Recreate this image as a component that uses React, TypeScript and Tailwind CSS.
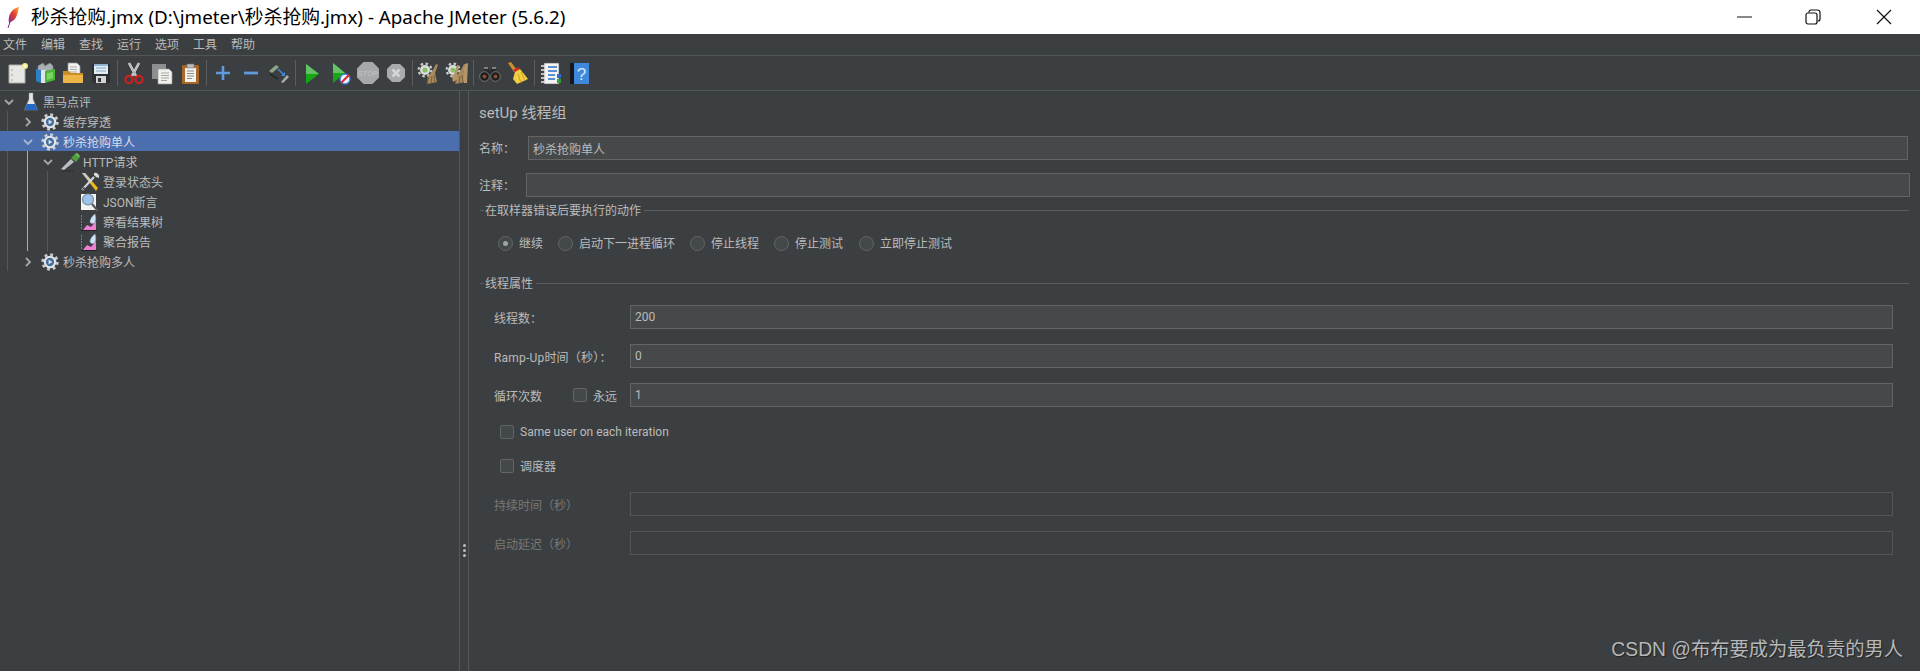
import type { ReactNode } from "react";

const cjk = "font-['Roboto','Noto_Sans_CJK_SC',sans-serif]";

/* ---------- toolbar icons ---------- */

const Svg = ({ w = 24, h = 24, children }: { w?: number; h?: number; children: ReactNode }) => (
  <svg width={w} height={h} viewBox={`0 0 ${w} ${h}`}>
    {children}
  </svg>
);

const NewIcon = () => (
  <Svg>
    <path d="M4 4h14l2 2v16H4z" fill="#e6e6e2" stroke="#a9a9a5" />
    <circle cx="7" cy="9" r="0.8" fill="#999" />
    <circle cx="7" cy="14" r="0.8" fill="#999" />
    <circle cx="7" cy="19" r="0.8" fill="#999" />
    <circle cx="20" cy="5" r="3" fill="#f5e98a" />
    <circle cx="20" cy="5" r="1.4" fill="#fffbd0" />
  </Svg>
);

const TemplatesIcon = () => (
  <Svg>
    <path d="M5 5l5-3 2 3 5-3 3 3v5H5z" fill="#a9b0b3" stroke="#7d8488" strokeWidth="0.6" />
    <path d="M3 8l5 1v13l-5-2z" fill="#2e7fc4" />
    <path d="M8 9h5v13H8z" fill="#dfe5e4" />
    <path d="M12 10l10-2v11l-10 3z" fill="#4cb53a" />
    <path d="M14 12l6-1v6l-6 2z" fill="#7ad65f" />
  </Svg>
);

const OpenIcon = () => (
  <Svg>
    <path d="M7 2h9l3 3v9H7z" fill="#f2f2f0" stroke="#999" strokeWidth="0.7" />
    <path d="M9 6h7M9 8.5h7M9 11h7" stroke="#aaa" />
    <path d="M2 10h6l2 2h12v9a1 1 0 0 1-1 1H3a1 1 0 0 1-1-1z" fill="#c98f27" />
    <path d="M2 14h20v7a1 1 0 0 1-1 1H3a1 1 0 0 1-1-1z" fill="#ecb547" />
  </Svg>
);

const SaveIcon = () => (
  <Svg>
    <path d="M3 3h18v19H5l-2-2z" fill="#2d3033" />
    <path d="M5 3h14v10H5z" fill="#e4ecf3" />
    <path d="M5 3h14v2H5z" fill="#8fb2d4" />
    <path d="M7 7h10M7 10h10" stroke="#86a8c8" />
    <path d="M7 15h10v7H7z" fill="#d2d4d4" />
    <path d="M9 17h3v4H9z" fill="#33363a" />
  </Svg>
);

const CutIcon = () => (
  <Svg>
    <path d="M7 2l7 13M17 2l-7 13" stroke="#d7dadb" strokeWidth="2.6" />
    <path d="M7 2l7 13M17 2l-7 13" stroke="#8d9295" strokeWidth="0.6" />
    <circle cx="7" cy="18.5" r="3.6" fill="none" stroke="#cf2020" strokeWidth="2.2" />
    <circle cx="17" cy="18.5" r="3.6" fill="none" stroke="#cf2020" strokeWidth="2.2" />
  </Svg>
);

const CopyIcon = () => (
  <Svg>
    <path d="M2 3h14v15H2z" fill="#8c8f90" />
    <path d="M8 8h11l3 3v12H8z" fill="#f1f1ef" stroke="#9b9b98" strokeWidth="0.7" />
    <path d="M11 12h8M11 14.5h8M11 17h8M11 19.5h6" stroke="#a5a5a2" />
  </Svg>
);

const PasteIcon = () => (
  <Svg>
    <rect x="4" y="4" width="17" height="19" rx="1.5" fill="#a8682a" />
    <path d="M7 7h11v14H7z" fill="#f2f2ef" />
    <path d="M9 3h7v4H9z" fill="#b9bdbf" stroke="#6f7376" strokeWidth="0.6" />
    <path d="M9 10h7M9 12.5h7M9 15h7M9 17.5h5" stroke="#8c8c8a" />
  </Svg>
);

const PlusIcon = () => (
  <Svg>
    <path d="M12 5v14M5 12h14" stroke="#5d9bdd" strokeWidth="2.6" />
  </Svg>
);

const MinusIcon = () => (
  <Svg>
    <path d="M5 12h14" stroke="#5d9bdd" strokeWidth="2.8" />
  </Svg>
);

const ToggleIcon = () => (
  <Svg>
    <path d="M2 10l7-6 3 2-7 6z" fill="#8aa684" />
    <path d="M3 13l8 5" stroke="#24272a" strokeWidth="1.6" />
    <path d="M11 8l6 6" stroke="#3f8fe0" strokeWidth="1.4" />
    <path d="M18 11v4h-4z" fill="#3f8fe0" />
    <path d="M14 21l6-7 2 2-6 6z" fill="#a9b0a5" />
  </Svg>
);

const PlayIcon = () => (
  <Svg>
    <path d="M6 3l13 10-13 10z" fill="#16a616" />
    <path d="M6 3l13 10H6z" fill="#67c267" />
  </Svg>
);

const PlayNoTimerIcon = () => (
  <Svg>
    <path d="M5 2l12 10-12 10z" fill="#16a616" />
    <path d="M5 2l12 10H5z" fill="#67c267" />
    <circle cx="17" cy="18" r="5" fill="#f1f4f8" stroke="#3c7fd0" strokeWidth="1.4" />
    <path d="M13 22l8-8" stroke="#d8263a" strokeWidth="2" />
  </Svg>
);

const StopIcon = () => (
  <svg width="24" height="24" viewBox="0 0 24 24">
    <path d="M7.500 1h9L23 7.500v9L16.500 23h-9L1 16.500v-9z" fill="#a6a8a9" />
    <text x="12" y="14.500" fontSize="7.500" fontWeight="700" fontFamily="Liberation Sans" fill="#bcbebf" textAnchor="middle">
      STOP
    </text>
  </svg>
);

const ShutdownIcon = () => (
  <Svg>
    <path d="M8 3h8l5 5v8l-5 5H8l-5-5V8z" fill="#a9abac" />
    <path d="M8.500 8.500l7 7M15.500 8.500l-7 7" stroke="#d5d6d6" strokeWidth="2.6" />
  </Svg>
);

const ClearIcon = ({ two }: { two?: boolean }) => (
  <Svg>
    <circle cx="8" cy="9" r="6.4" fill="none" stroke="#c9cbc9" strokeWidth="2.2" strokeDasharray="2.500 2.500" />
    <circle cx="8" cy="9" r="5" fill="#dcdedd" />
    <circle cx="8" cy="9" r="2.600" fill="#8bc063" />
    <path d="M15 11l4-8 2 1-3 8 2 9-10 2 1-8z" fill="#a98a5c" />
    <path d="M12 16l-2 7M15 15l-1 8M17 14l1 7" stroke="#6d5433" strokeWidth="0.8" />
    {two && <path d="M9 13l3-9 2 1-2 8 1 5-5 3-1-5z" fill="#b59668" />}
    {two && <path d="M20 3l3-1-1 20h-3l-1-9z" fill="#b59668" />}
  </Svg>
);

const SearchIcon = () => (
  <Svg>
    <path d="M7 7h3l2 3 2-3h3l5 9H2z" fill="#2a2a2a" />
    <path d="M6 7h4M14 7h4" stroke="#9a9a9a" strokeWidth="1.4" />
    <circle cx="6.500" cy="15.500" r="4.800" fill="#1c1c1c" stroke="#8a8a8a" strokeWidth="0.8" />
    <circle cx="17.500" cy="15.500" r="4.800" fill="#1c1c1c" stroke="#8a8a8a" strokeWidth="0.8" />
    <circle cx="6.500" cy="15.500" r="2" fill="#8a4a34" />
    <circle cx="17.500" cy="15.500" r="2" fill="#8a4a34" />
  </Svg>
);

const BroomIcon = () => (
  <Svg>
    <path d="M2 2l3-1 6 8-3 2z" fill="#c98f2b" />
    <path d="M7 9l5-3 2 2-5 3z" fill="#d8262c" />
    <path d="M9 11l5-3 8 10-11 5-4-5z" fill="#f2cf3e" />
    <path d="M12 13l3 9M15 11l4 9" stroke="#c9a12a" />
  </Svg>
);

const FunctionIcon = () => (
  <Svg>
    <path d="M5 2h15v21H5z" fill="#f3f3f3" stroke="#555" strokeWidth="0.6" />
    <path d="M2 5h5M2 9h5M2 13h5M2 17h5M2 21h5" stroke="#e8e8e8" strokeWidth="1.4" />
    <path d="M9 6h9M9 10h9M9 14h7M9 18h7" stroke="#2b6fc4" strokeWidth="1.6" />
    <path d="M18 13h4v4h-4z" fill="#2b6fc4" />
    <path d="M18 18h4v4h-4z" fill="#35a03a" />
  </Svg>
);

const HelpIcon = () => (
  <Svg>
    <path d="M3 2h5v21H3z" fill="#16191c" />
    <path d="M7 2h15v21H7z" fill="#3f88dd" />
    <text x="14.500" y="19" fontSize="17" fontFamily="Liberation Sans" fill="#d9e9fb" textAnchor="middle">
      ?
    </text>
  </Svg>
);

const ClearAllIcon = () => <ClearIcon two />;

const toolbarGroups = [
  [NewIcon, TemplatesIcon, OpenIcon, SaveIcon],
  [CutIcon, CopyIcon, PasteIcon],
  [PlusIcon, MinusIcon, ToggleIcon],
  [PlayIcon, PlayNoTimerIcon, StopIcon, ShutdownIcon],
  [ClearIcon, ClearAllIcon],
  [SearchIcon, BroomIcon],
  [FunctionIcon, HelpIcon],
];

/* ---------- tree icons ---------- */

const Gear = () => (
  <svg width="18" height="18" viewBox="0 0 20 20">
    <circle cx="10" cy="10" r="8.200" fill="none" stroke="#c9cbcc" strokeWidth="3" strokeDasharray="3.200 3.240" />
    <circle cx="10" cy="10" r="7" fill="#e4e5e6" />
    <circle cx="10" cy="10" r="4.600" fill="#44709f" />
    <path d="M8.500 7.500l4 2.500-4 2.500z" fill="#dfe8f2" />
  </svg>
);

const Flask = () => (
  <svg width="14" height="20" viewBox="0 0 14 20">
    <path d="M5 1h4v6l4.500 11H.500L5 7z" fill="#e3e6e8" stroke="#8a9095" strokeWidth="0.5" />
    <path d="M3 12h8l2.500 6H.500z" fill="#2467c4" />
  </svg>
);

const Dropper = () => (
  <svg width="22" height="20" viewBox="0 0 22 20">
    <path d="M1 17l10-10 3 3L4 18z" fill="#b9bec0" />
    <path d="M11 6l4-4 5 3-4 5z" fill="#4e9e3e" />
    <path d="M15 2l2-1 3 3-1 1z" fill="#7bc964" />
    <path d="M2 19h12" stroke="#2c2e30" strokeWidth="1" />
  </svg>
);

const Wrench = () => (
  <svg width="20" height="20" viewBox="0 0 20 20">
    <path d="M2 1l3 0 13 15-2 3z" fill="#e9b91f" />
    <path d="M2 1l3 0 7 8-2 2z" fill="#c8c8c8" />
    <path d="M2 18L14 5" stroke="#d8d8d8" strokeWidth="2" />
    <path d="M14 1a4 4 0 0 1 5 5l-3-1-2-2z" fill="#d8d8d8" />
    <path d="M1 19l3-4 1 1z" fill="#222" />
  </svg>
);

const Assertion = () => (
  <svg width="20" height="20" viewBox="0 0 20 20">
    <path d="M1 2h15v16H1z" fill="#f3f3f3" />
    <circle cx="8" cy="7.500" r="5.500" fill="#9cc4ec" stroke="#7b8c9c" strokeWidth="1.200" />
    <path d="M12 12l6 7" stroke="#55585a" strokeWidth="2.200" />
  </svg>
);

const Graph = () => (
  <svg width="20" height="20" viewBox="0 0 20 20">
    <path d="M1.500 3v15" stroke="#77797a" strokeDasharray="2 1" />
    <path d="M1 18.500h16" stroke="#202224" />
    <path d="M3 18l4-5 4 2 5-6v9z" fill="#ee7fd0" />
    <path d="M10 10c0-3 2-6 5-8 1 3 1 6 0 8-1 2-4 2-5 0z" fill="#cfe1f6" stroke="#8fa8c4" strokeWidth="0.5" />
  </svg>
);

/* ---------- tree ---------- */

type TreeRowProps = {
  label: string;
  icon: ReactNode;
  level: 0 | 1 | 2 | 3;
  arrow?: "down" | "right";
  selected?: boolean;
  guides?: ("root" | "selected" | "http")[];
};

const indent = {
  0: { arrow: "w-[24px] pl-[3px]", text: "ml-[5px]" },
  1: { arrow: "w-[41px] pl-[22px]", text: "ml-[4px]" },
  2: { arrow: "w-[60px] pl-[42px]", text: "ml-[1px]" },
  3: { arrow: "w-[80px]", text: "ml-[3px]" },
};

const TreeRow = ({ label, icon, level, arrow, selected, guides = [] }: TreeRowProps) => (
  <div className={`relative flex h-5 items-center pt-[2px] ${selected ? "bg-[#4b6eaf] text-[#d8dde6]" : ""}`}>
    {guides.includes("root") && <span className="absolute inset-y-0 left-[7px] w-px bg-[#55585a]" />}
    {guides.includes("selected") && <span className="absolute inset-y-0 left-[27px] w-px bg-[#7fb6e6]" />}
    {guides.includes("http") && <span className="absolute inset-y-0 left-[47px] w-px bg-[#55585a]" />}
    <span className={`flex shrink-0 items-center ${indent[level].arrow}`}>
      {arrow && (
        <svg width="12" height="12" viewBox="0 0 12 12">
          <path
            d={arrow === "down" ? "M2 4l4 4 4-4" : "M4 2l4 4-4 4"}
            fill="none"
            stroke={selected ? "#a9b6cc" : "#a4a6a8"}
            strokeWidth="1.800"
          />
        </svg>
      )}
    </span>
    {icon}
    <span className={`pt-[2px] ${indent[level].text}`}>{label}</span>
  </div>
);

/* ---------- form bits ---------- */

const Field = ({ value = "", disabled, className }: { value?: string; disabled?: boolean; className: string }) => (
  <input
    readOnly
    defaultValue={value}
    className={`h-6 border px-[4px] text-[12px] outline-none ${
      disabled ? "border-[#535556] bg-[#3c3f41]" : "border-[#646464] bg-[#45494a] text-[#bbbbbb]"
    } ${className}`}
  />
);

const Legend = ({ label, className }: { label: string; className: string }) => (
  <div className={`flex items-center pl-[1px] pr-[1px] ${className}`}>
    <span className="h-px w-[4px] bg-[#5a5d5f]" />
    <span className="px-[1px] pt-[1px] text-[12px]">{label}</span>
    <span className="ml-[2px] h-px flex-1 bg-[#5a5d5f]" />
  </div>
);

const Radio = ({ label, checked, className }: { label: string; checked?: boolean; className?: string }) => (
  <div className={`flex items-center ${className}`}>
    <span className="flex size-[15px] items-center justify-center rounded-full border border-[#646464] bg-[#43494a]">
      {checked && <span className="size-[5px] rounded-full bg-[#a0a3a5]" />}
    </span>
    <span className="ml-[6px] pt-[1px]">{label}</span>
  </div>
);

const Check = () => <span className="size-[14px] shrink-0 rounded-[2px] border border-[#646464] bg-[#43494a]" />;

const menus = ["文件", "编辑", "查找", "运行", "选项", "工具", "帮助"];

export default function App() {
  return (
    <div className={`relative flex h-[671px] w-[1920px] flex-col overflow-hidden bg-[#3c3f41] text-[12px] text-[#bbbbbb] ${cjk}`}>
      {/* Title bar */}
      <div className="flex h-[34px] items-center bg-white text-black">
        <svg className="ml-[7px]" width="13" height="23" viewBox="0 0 13 23">
          <defs>
            <linearGradient id="feather" x1="1" y1="0" x2="0" y2="1">
              <stop offset="0" stopColor="#f6b73c" />
              <stop offset="0.450" stopColor="#e8402f" />
              <stop offset="1" stopColor="#7d2a8c" />
            </linearGradient>
          </defs>
          <path d="M12 1C7 2 3 6 2 11c-.5 2-.5 4 0 6l5-3c3-3 4-8 5-13z" fill="url(#feather)" />
          <path d="M3 16L1 22" stroke="#7d2a8c" strokeWidth="1" />
        </svg>
        <span className="ml-[11px] font-['Noto_Sans','Noto_Sans_CJK_SC',sans-serif] text-[18.800px] leading-none">
          秒杀抢购.jmx (D:\jmeter\秒杀抢购.jmx) - Apache JMeter (5.6.2)
        </span>
        <div className="ml-auto flex items-center">
          <svg width="16" height="16" viewBox="0 0 16 16" className="mr-[53px]">
            <path d="M1 8h15" stroke="#111" strokeWidth="1" />
          </svg>
          <svg width="16" height="16" viewBox="0 0 16 16" className="mr-[55px]">
            <rect x="1" y="4" width="11" height="11" rx="2" fill="none" stroke="#111" strokeWidth="1.200" />
            <path d="M4 3.500V3a2 2 0 0 1 2-2h6.500A2.500 2.500 0 0 1 15 3.500V10a2 2 0 0 1-2 2h-.500" fill="none" stroke="#111" strokeWidth="1.200" />
          </svg>
          <svg width="16" height="16" viewBox="0 0 16 16" className="mr-[28px]">
            <path d="M1 1l14 14M15 1L1 15" stroke="#111" strokeWidth="1.200" />
          </svg>
        </div>
      </div>

      {/* Menu bar */}
      <div className="flex h-[22px] items-center border-b border-[#515658] pl-[3px]">
        {menus.map((m) => (
          <span key={m} className="w-[38px]">
            {m}
          </span>
        ))}
      </div>

      {/* Toolbar */}
      <div className="flex h-[35px] items-center border-b border-[#515658] pl-[3px]">
        {toolbarGroups.map((group, i) => (
          <div key={i} className="flex items-center">
            {i > 0 && (
              <span className="flex h-[26px] w-[5px] justify-center">
                <span className="w-px bg-[#5a5d5f]" />
              </span>
            )}
            {group.map((Icon, j) => (
              <span key={j} className="flex h-6 w-[28px] items-center justify-center">
                <Icon />
              </span>
            ))}
          </div>
        ))}
      </div>

      {/* Main */}
      <div className="flex flex-1">
        {/* Tree */}
        <div className="w-[460px] shrink-0 border-r border-[#55585a]">
          <TreeRow level={0} arrow="down" icon={<Flask />} label="黑马点评" />
          <TreeRow level={1} arrow="right" icon={<Gear />} label="缓存穿透" guides={["root"]} />
          <TreeRow level={1} arrow="down" icon={<Gear />} label="秒杀抢购单人" selected />
          <TreeRow level={2} arrow="down" icon={<Dropper />} label="HTTP请求" guides={["root", "selected"]} />
          <TreeRow level={3} icon={<Wrench />} label="登录状态头" guides={["root", "selected", "http"]} />
          <TreeRow level={3} icon={<Assertion />} label="JSON断言" guides={["root", "selected", "http"]} />
          <TreeRow level={3} icon={<Graph />} label="察看结果树" guides={["root", "selected", "http"]} />
          <TreeRow level={3} icon={<Graph />} label="聚合报告" guides={["root", "selected", "http"]} />
          <TreeRow level={1} arrow="right" icon={<Gear />} label="秒杀抢购多人" guides={["root"]} />
        </div>

        {/* Split handle */}
        <div className="flex w-2 shrink-0 flex-col items-center gap-[2px] pt-[453px]">
          <span className="size-[3px] rounded-full bg-[#bbbbbb]" />
          <span className="size-[3px] rounded-full bg-[#bbbbbb]" />
          <span className="size-[3px] rounded-full bg-[#bbbbbb]" />
        </div>

        {/* Thread group form */}
        <div className="flex-1 border-l border-[#55585a] pl-[10px] pr-[10px] pt-[12px]">
          <div className="text-[15px] leading-[20px]">setUp 线程组</div>

          <div className="mt-[13px] flex items-center pr-[2px]">
            <span className="w-[49px] shrink-0 pt-[2px]">名称：</span>
            <Field value="秒杀抢购单人" className="flex-1" />
          </div>
          <div className="mt-[13px] flex items-center">
            <span className="w-[47px] shrink-0 pt-[2px]">注释：</span>
            <Field className="flex-1" />
          </div>

          <Legend label="在取样器错误后要执行的动作" className="mt-[5px] h-[17px]" />
          <div className="mt-[14px] flex h-5 items-center pl-[19px]">
            <Radio label="继续" checked className="w-[60px]" />
            <Radio label="启动下一进程循环" className="w-[132px]" />
            <Radio label="停止线程" className="w-[84px]" />
            <Radio label="停止测试" className="w-[85px]" />
            <Radio label="立即停止测试" />
          </div>

          <Legend label="线程属性" className="mt-[22px] h-[17px]" />

          <div className="mt-[13px] flex items-center pl-[15px] pr-[17px]">
            <span className="w-[136px] shrink-0 pt-[3px]">线程数：</span>
            <Field value="200" className="flex-1" />
          </div>
          <div className="mt-[15px] flex items-center pl-[15px] pr-[17px]">
            <span className="w-[136px] shrink-0 pt-[3px] tracking-[0.2px]">Ramp-Up时间（秒）：</span>
            <Field value="0" className="flex-1" />
          </div>
          <div className="mt-[15px] flex items-center pl-[15px] pr-[17px]">
            <span className="w-[79px] shrink-0 pt-[3px]">循环次数</span>
            <Check />
            <span className="ml-[6px] w-[37px] shrink-0 pt-[3px]">永远</span>
            <Field value="1" className="flex-1" />
          </div>

          <div className="mt-[15px] flex h-5 items-center gap-[6px] pl-[21px]">
            <Check />
            <span>Same user on each iteration</span>
          </div>
          <div className="mt-[14px] flex h-5 items-center gap-[6px] pl-[21px]">
            <Check />
            <span className="pt-[2px]">调度器</span>
          </div>

          <div className="mt-[16px] flex items-center pl-[15px] pr-[17px] text-[#777777]">
            <span className="w-[136px] shrink-0 pt-[3px]">持续时间（秒）</span>
            <Field disabled className="flex-1" />
          </div>
          <div className="mt-[15px] flex items-center pl-[15px] pr-[17px] text-[#777777]">
            <span className="w-[136px] shrink-0 pt-[3px]">启动延迟（秒）</span>
            <Field disabled className="flex-1" />
          </div>
        </div>
      </div>

      {/* Watermark */}
      <span className="absolute bottom-[10px] right-[17px] font-['Liberation_Sans','Noto_Sans_CJK_SC',sans-serif] text-[19.300px] leading-[22px] text-[#b5b7b8] [text-shadow:1px_1px_1px_#222]">
        CSDN @布布要成为最负责的男人
      </span>
    </div>
  );
}
